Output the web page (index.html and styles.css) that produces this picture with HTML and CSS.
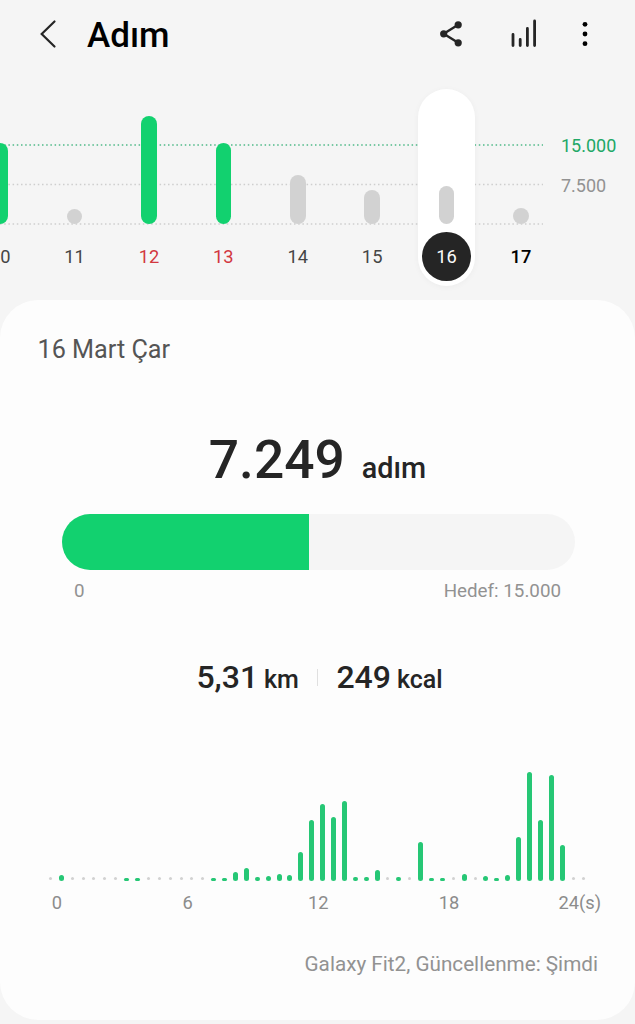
FILE: index.html
```html
<!DOCTYPE html>
<html lang="tr">
<head>
    <meta charset="UTF-8">
    <meta name="viewport" content="width=device-width, initial-scale=1.0">
    <title>Adım</title>
    <link rel="stylesheet" href="styles.css">
</head>
<body>
    <header class="header">
        <svg class="back" width="20" height="30" viewBox="0 0 20 30">
            <path d="M16.5 2.5 L3.7 15 L16.5 27.5"/>
        </svg>
        <h1 class="title">Adım</h1>
        <svg class="share" width="26" height="28" viewBox="0 0 26 28">
            <path d="M19.2 4.8 L4.7 13.8 L19.2 22.8"/>
            <circle cx="19.2" cy="4.8" r="3.6"/>
            <circle cx="4.7" cy="13.8" r="3.6"/>
            <circle cx="19.2" cy="22.8" r="3.6"/>
        </svg>
        <svg class="stats" width="28" height="30" viewBox="0 0 28 30">
            <path d="M3 15.5 V26.5 M10.2 20.5 V26.5 M17.4 9.5 V26.5 M24.6 2 V26.5"/>
        </svg>
        <svg class="more" width="8" height="28" viewBox="0 0 8 28">
            <circle cx="4" cy="4.3" r="2.4"/>
            <circle cx="4" cy="14" r="2.4"/>
            <circle cx="4" cy="23.7" r="2.4"/>
        </svg>
    </header>

    <section class="week">
        <svg class="lines" width="543" height="197">
            <line class="line goal" x1="0" y1="56" x2="543" y2="56"/>
            <line class="line" x1="0" y1="95.5" x2="543" y2="95.5"/>
            <line class="line" x1="0" y1="135" x2="543" y2="135"/>
        </svg>
        <div class="days" id="days"></div>
        <div class="axis">
            <span class="axis-goal">15.000</span>
            <span>7.500</span>
        </div>
    </section>

    <main class="card">
        <p class="date">16 Mart Çar</p>
        <p class="steps"><span class="steps-count">7.249</span><span class="steps-unit">adım</span></p>
        <div class="progress"><div class="progress-fill"></div></div>
        <div class="progress-labels"><span>0</span><span>Hedef: 15.000</span></div>
        <div class="totals">
            <p class="total">5,31 <small>km</small></p>
            <span class="separator"></span>
            <p class="total">249 <small>kcal</small></p>
        </div>
        <div class="hours" id="hours"></div>
        <div class="hour-labels">
            <span>0</span><span>6</span><span>12</span><span>18</span><span>24(s)</span>
        </div>
        <p class="device">Galaxy Fit2, Güncellenme: Şimdi</p>
    </main>

    <script>
        // label, bar height, extra classes
        const days = [
            ['10', 81.5, 'done'],
            ['11', 15.5, ''],
            ['12', 108, 'done holiday'],
            ['13', 81.5, 'done holiday'],
            ['14', 49, ''],
            ['15', 34.5, ''],
            ['16', 38.5, 'selected'],
            ['17', 16, 'today']
        ];
        document.getElementById('days').innerHTML = days.map(day => `
            <div class="day ${day[2]}">
                <div class="day-track"><div class="day-bar" style="height: ${day[1]}px"></div></div>
                <span class="day-label">${day[0]}</span>
            </div>
        `).join('');

        // 0 = no steps, drawn as a small grey dot
        const hours = [
            0, 6, 0, 0, 0, 0, 0, 3, 3, 0, 0, 0, 0, 0, 0, 3, 3, 9, 12.5, 4,
            4.5, 6.5, 6, 28.5, 60.5, 77, 63.5, 79.5, 4, 3.5, 10.5, 0, 4, 0, 38.5, 3, 3, 0, 6.5, 0,
            5, 3, 6, 44, 108.5, 61, 105.5, 36, 0, 0
        ];
        document.getElementById('hours').innerHTML = hours.map(h =>
            h ? `<i class="hour"><b style="height: ${h}px"></b></i>` : '<i class="hour empty"><b></b></i>'
        ).join('');
    </script>
</body>
</html>
```
FILE: styles.css
```css
* {
    box-sizing: border-box;
}
body {
    margin: 0;
    width: 635px;
    height: 1024px;
    overflow: hidden;
    background-color: #f5f5f5;
    color: #252525;
    font-family: Roboto, sans-serif;
}
p {
    margin: 0;
}
svg {
    display: block;
    flex: none;
}

/* header */
.header {
    display: flex;
    align-items: center;
    height: 68px;
    padding-left: 38px;
}
.back {
    fill: none;
    stroke: #252525;
    stroke-width: 2.2;
    stroke-linecap: round;
}
.title {
    width: 352px;
    margin: 4px 0 0 29px;
    font-size: 35px;
    font-weight: 500;
    line-height: 44px;
    color: #000;
}
.share {
    fill: #252525;
}
.share path {
    fill: none;
    stroke: #252525;
    stroke-width: 2.4;
}
.stats {
    margin-left: 45px;
    fill: none;
    stroke: #252525;
    stroke-width: 2.8;
    stroke-linecap: round;
}
.more {
    margin-left: 43px;
    fill: #000;
}

/* week chart */
.week {
    display: grid;
    grid-template-columns: 543px 92px;
    height: 232px;
    padding-top: 21px;
}
.lines, .days {
    grid-area: 1 / 1;
}
.line {
    stroke: #cecece;
    stroke-width: 1.4;
    stroke-dasharray: 1.5 2.7;
}
.goal {
    stroke: #4fb988;
}
.days {
    display: grid;
    grid-template-columns: repeat(8, 74.4px);
    justify-items: center;
    margin-left: -37px;
    height: 197px;
}
.day {
    width: 57px;
    height: 197px;
    display: flex;
    flex-direction: column;
    align-items: center;
    border-radius: 29px;
}
.day-track {
    display: flex;
    align-items: flex-end;
    height: 135px;
}
.day-bar {
    width: 15.5px;
    border-radius: 8px;
    background-color: #d2d2d2;
}
.done .day-bar {
    background-color: #12d16f;
}
.day-label {
    width: 49px;
    height: 49px;
    margin-top: 8px;
    border-radius: 50%;
    font-size: 18.3px;
    line-height: 50px;
    text-align: center;
    color: #454545;
}
.holiday .day-label {
    color: #d2383f;
}
.today .day-label {
    color: #000;
    font-weight: 500;
}
.selected {
    background-color: #fff;
    box-shadow: 0 1px 6px rgba(0, 0, 0, 0.04);
}
.selected .day-label {
    background-color: #252525;
    color: #fafafa;
}
.axis {
    display: flex;
    flex-direction: column;
    gap: 16px;
    padding: 45px 0 0 18px;
    font-size: 18px;
    line-height: 24px;
    color: #929292;
}
.axis-goal {
    color: #21a866;
}

/* day card */
.card {
    height: 720px;
    padding-top: 35px;
    border-radius: 38px;
    background-color: #fdfdfd;
    overflow: hidden;
}
.date {
    padding-left: 37.5px;
    font-size: 25.2px;
    line-height: 30px;
    color: #555;
}
.steps {
    display: flex;
    justify-content: center;
    align-items: baseline;
    gap: 17px;
    margin-top: 64px;
    font-weight: 500;
    line-height: 62px;
}
.steps-count {
    font-size: 53.3px;
}
.steps-unit {
    font-size: 28.8px;
}
.progress {
    width: 513px;
    height: 56px;
    margin: 14.5px 0 0 62px;
    border-radius: 28px;
    background-color: #f5f5f5;
    overflow: hidden;
}
.progress-fill {
    width: 247px;
    height: 56px;
    background-color: #12d16f;
}
.progress-labels {
    display: flex;
    justify-content: space-between;
    margin-top: 9px;
    padding: 0 74px;
    font-size: 18.8px;
    line-height: 24px;
    color: #929292;
}
.totals {
    display: flex;
    justify-content: center;
    align-items: center;
    gap: 18px;
    height: 40px;
    margin-top: 56px;
    padding-left: 4px;
}
.total {
    font-size: 32px;
    font-weight: 500;
    line-height: 40px;
    word-spacing: -2px;
}
.total small {
    font-size: 25px;
}
.separator {
    width: 1.5px;
    height: 17px;
    margin-top: -3px;
    background-color: #e0e0e0;
}

/* hourly chart */
.hours {
    display: flex;
    align-items: flex-end;
    height: 110px;
    margin: 72px 0 0 44.9px;
}
.hour {
    flex: none;
    display: flex;
    justify-content: center;
    width: 10.9px;
}
.hour b {
    width: 5px;
    border-radius: 2.5px;
    background-color: #26c775;
}
.empty b {
    width: 3px;
    height: 3px;
    margin-bottom: 0.5px;
    background-color: #d2d2d2;
}
.hour-labels {
    display: grid;
    grid-template-columns: repeat(5, 130.7px);
    margin: 10px 0 0 -8.4px;
    text-align: center;
    font-size: 18.3px;
    line-height: 24px;
    color: #8c8c8c;
}
.device {
    margin-top: 36px;
    padding-right: 37px;
    text-align: right;
    font-size: 20.7px;
    line-height: 26px;
    color: #929292;
}
```
